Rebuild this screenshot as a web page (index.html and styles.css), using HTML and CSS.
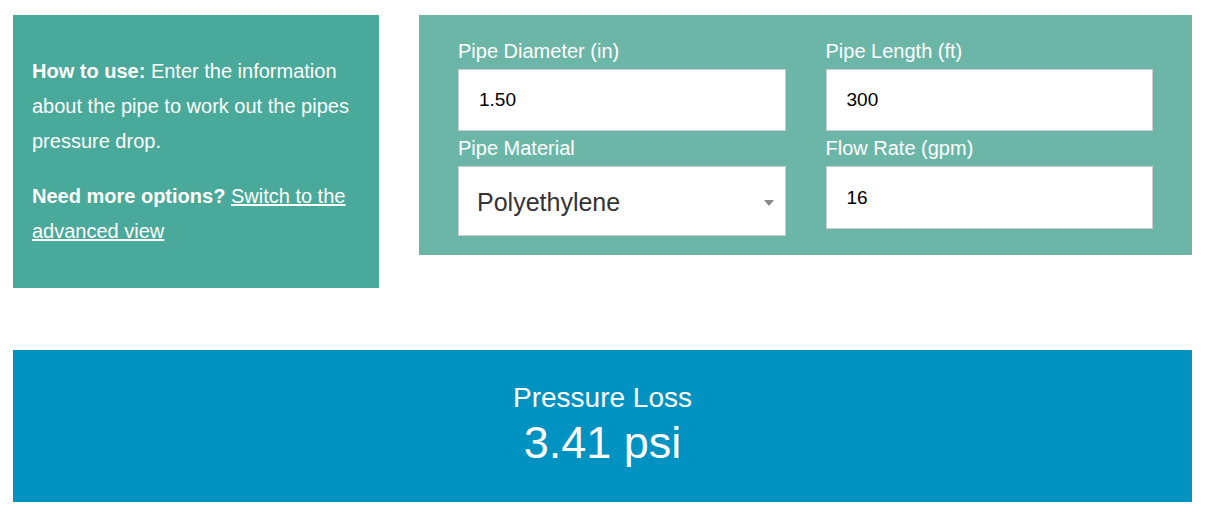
FILE: index.html
```html
<!DOCTYPE html>
<html lang="en">
<head>
  <meta charset="UTF-8">
  <meta name="viewport" content="width=device-width, initial-scale=1.0">
  <title>Pipe Pressure Drop Calculator</title>
  <link rel="stylesheet" href="styles.css">
</head>
<body>
  <div class="calculator">
    <div class="top-row">
      <div class="info">
        <p><strong>How to use:</strong> Enter the information about the pipe to work out the pipes pressure drop.</p>
        <p><strong>Need more options?</strong> <a href="#">Switch to the advanced view</a></p>
      </div>

      <form class="inputs" id="pipeForm" action="">
        <div class="field">
          <label for="diameter">Pipe Diameter (in)</label>
          <input type="text" id="diameter" name="diameter" value="1.50" />
        </div>
        <div class="field">
          <label for="length">Pipe Length (ft)</label>
          <input type="text" id="length" name="length" value="300" />
        </div>
        <div class="field">
          <label for="material">Pipe Material</label>
          <div class="select-wrap">
            <select id="material" name="material">
              <option>Polyethylene</option>
              <option>PVC</option>
              <option>Copper</option>
              <option>Steel</option>
            </select>
          </div>
        </div>
        <div class="field">
          <label for="flow">Flow Rate (gpm)</label>
          <input type="text" id="flow" name="flow" value="16" />
        </div>
      </form>
    </div>

    <div class="result">
      <div class="result-title">Pressure Loss</div>
      <div class="result-value"><span id="loss">3.41</span> psi</div>
    </div>
  </div>
</body>
</html>
```

FILE: styles.css
```css
* {
  margin: 0px;
  padding: 0px;
  box-sizing: border-box;
  font-family: "Liberation Sans", Arial, sans-serif;
}

body {
  background-color: #fff;
}

.calculator {
  width: 1179px;
  margin: 15px 0px 0px 13px;
}

.top-row {
  display: flex;
  align-items: flex-start;
  gap: 40px;
}

.info {
  width: 366px;
  background-color: #49a99a;
  color: #fff;
  padding: 39px 19px 39px;
  font-size: 20px;
  line-height: 35px;
}

.info p + p {
  margin-top: 20px;
}

.info a {
  color: #fff;
  text-decoration: underline;
}

.inputs {
  flex: 1;
  background-color: #6cb6a8;
  padding: 24px 39px 19px;
  display: grid;
  grid-template-columns: 1fr 1fr;
  column-gap: 40px;
  row-gap: 5px;
  align-items: start;
}

.field label {
  display: block;
  color: #fff;
  font-size: 20px;
  line-height: 24px;
  margin-bottom: 6px;
}

.field input {
  display: block;
  width: 100%;
  height: 62px;
  border: 1px solid #ccc;
  padding: 0px 20px;
  font-size: 19px;
  color: #000;
  background-color: #fff;
  outline: none;
}

#flow {
  height: 63px;
}

.select-wrap {
  position: relative;
}

.select-wrap select {
  display: block;
  width: 100%;
  height: 70px;
  border: 1px solid #ccc;
  border-radius: 0px;
  padding: 2px 18px 0px;
  font-size: 25px;
  color: #333;
  background-color: #fff;
  appearance: none;
  -webkit-appearance: none;
  outline: none;
}

.select-wrap::after {
  content: "";
  position: absolute;
  right: 12px;
  top: 34px;
  border-left: 5px solid transparent;
  border-right: 5px solid transparent;
  border-top: 6px solid #888;
  pointer-events: none;
}

.result {
  margin-top: 62px;
  background-color: #0092c0;
  color: #fff;
  text-align: center;
  padding: 33px 0px 35px;
}

.result-title {
  font-size: 28px;
  line-height: 30px;
}

.result-value {
  margin-top: 6px;
  font-size: 45px;
  line-height: 48px;
}
```
